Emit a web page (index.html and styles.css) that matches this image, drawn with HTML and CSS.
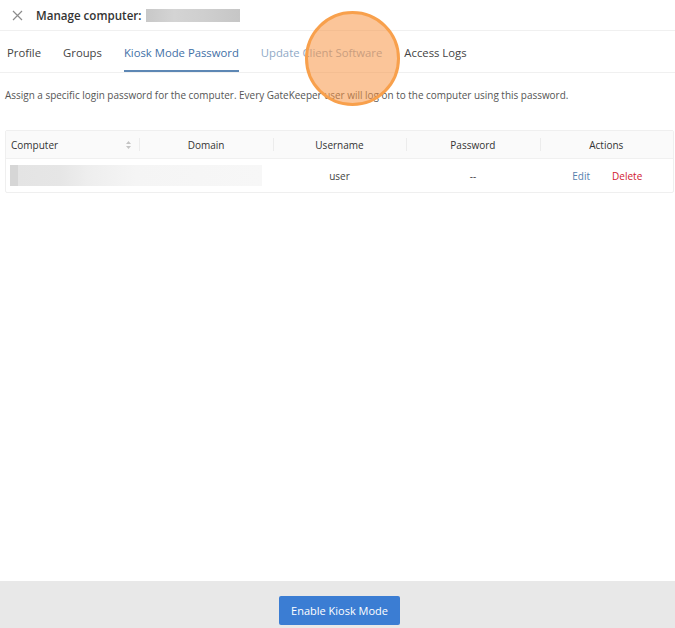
FILE: index.html
```html
<!DOCTYPE html>
<html>
<head>
<meta charset="utf-8">
<link rel="stylesheet" href="styles.css">
</head>
<body>
<div class="page">
  <div class="header">
    <span class="close">
      <svg width="11" height="11" viewBox="0 0 11 11"><path d="M1 1L10 10M10 1L1 10" stroke="#8c8c8c" stroke-width="1.2" fill="none"/></svg>
    </span>
    <span class="title">Manage computer:</span>
    <span class="redact-title"></span>
  </div>
  <div class="tabs">
    <span class="tab">Profile</span>
    <span class="tab">Groups</span>
    <span class="tab active">Kiosk Mode Password</span>
    <span class="tab faded">Update Client Software</span>
    <span class="tab">Access Logs</span>
    <span class="highlight"></span>
  </div>
  <div class="content">
    <p class="desc">Assign a specific login password for the computer. Every GateKeeper user will log on to the computer using this password.</p>
    <div class="table">
      <div class="row head">
        <div class="cell left">Computer <span class="sorter">
          <svg width="5" height="8" viewBox="0 0 5 8"><path d="M2.5 0L5 3H0Z M2.5 8L5 5H0Z" fill="#c4c4c4"/></svg>
        </span></div>
        <div class="cell">Domain</div>
        <div class="cell">Username</div>
        <div class="cell">Password</div>
        <div class="cell">Actions</div>
      </div>
      <div class="row body">
        <div class="cell left"><span class="redact-row"></span></div>
        <div class="cell"></div>
        <div class="cell">user</div>
        <div class="cell">--</div>
        <div class="cell actions"><span class="edit">Edit</span><span class="delete">Delete</span></div>
      </div>
    </div>
  </div>
  <div class="footer">
    <button class="primary">Enable Kiosk Mode</button>
  </div>
</div>
</body>
</html>
```
FILE: styles.css
```css
* { box-sizing: border-box; }
html, body { margin: 0; padding: 0; }
body {
  font-family: "Open Sans", "Noto Sans", sans-serif;
  color: #333;
  background: #fff;
  width: 675px;
  height: 628px;
  overflow: hidden;
}
.page {
  display: flex;
  flex-direction: column;
  height: 628px;
}
.header {
  height: 31px;
  display: flex;
  align-items: center;
  padding-left: 12px;
  border-bottom: 1px solid #f0f0f0;
}
.close { display: flex; width: 11px; height: 11px; margin-right: 13px; }
.title { font-size: 11.6px; font-weight: 600; color: #333; }
.redact-title {
  display: inline-block;
  width: 94px;
  height: 13px;
  margin-left: 4px;
  background: linear-gradient(90deg, #c8c8c8 0, #d4d4d4 30%, #cfcfcf 60%, #c6c6c6 100%);
}
.tabs {
  position: relative;
  height: 42px;
  display: flex;
  align-items: stretch;
  padding-left: 7px;
  gap: 22px;
  border-bottom: 1px solid #f0f0f0;
}
.tab {
  font-size: 11.3px;
  color: #444;
  display: flex;
  align-items: center;
  padding-top: 4px;
  border-bottom: 2px solid transparent;
}
.tab.active { color: #3f70a6; border-bottom-color: #5d87b4; }
.tab.faded { color: #8fa9c6; }
.highlight {
  position: absolute;
  left: 305px;
  top: -20px;
  width: 95px;
  height: 95px;
  border-radius: 50%;
  background: rgba(247, 150, 70, 0.55);
  border: 3px solid #f8a04c;
}
.content { flex: 1; padding: 0 1px 0 5px; }
.desc {
  margin: 15px 0 0 0;
  font-size: 9.95px;
  color: #555;
  line-height: 14px;
}
.table {
  margin-top: 28px;
  border: 1px solid #efefef;
  border-radius: 2px;
}
.row { display: grid; grid-template-columns: repeat(5, minmax(0, 1fr)); }
.row.head { background: #fafafa; height: 28px; border-bottom: 1px solid #f0f0f0; }
.row.body { height: 33px; }
.cell {
  font-size: 10px;
  display: flex;
  align-items: center;
  justify-content: center;
  position: relative;
  color: #444;
}
.row.head .cell { color: #333; }
.row.head .cell + .cell::before {
  content: "";
  position: absolute;
  left: 0;
  top: 7px;
  bottom: 7px;
  width: 1px;
  background: #ececec;
}
.cell.left { justify-content: space-between; padding: 0 8px 0 5px; }
.sorter { display: flex; }
.row.body .cell.left { justify-content: flex-start; padding: 0 0 0 4px; overflow: visible; }
.redact-row {
  display: block;
  width: 252px;
  min-width: 252px;
  height: 21px;
  background: linear-gradient(90deg, #d6d6d6 0, #d6d6d6 3%, #e4e4e4 3%, #e6e6e6 20%, #eeeeee 31%, #f5f5f5 50%, #f7f7f7 100%);
  position: relative;
  z-index: 1;
}
.actions { gap: 22px; justify-content: center; padding-left: 2px; }
.edit { color: #5580ad; }
.delete { color: #d1202f; }
.footer {
  height: 47px;
  background: #e8e8e8;
  display: flex;
  justify-content: center;
  align-items: flex-start;
  padding-top: 15px;
  padding-left: 4px;
}
.primary {
  width: 121px;
  height: 29px;
  background: #3b7dd3;
  color: #fff;
  border: none;
  border-radius: 2px;
  font-family: "Open Sans", "Noto Sans", sans-serif;
  font-size: 11px;
  padding: 0;
}
```
